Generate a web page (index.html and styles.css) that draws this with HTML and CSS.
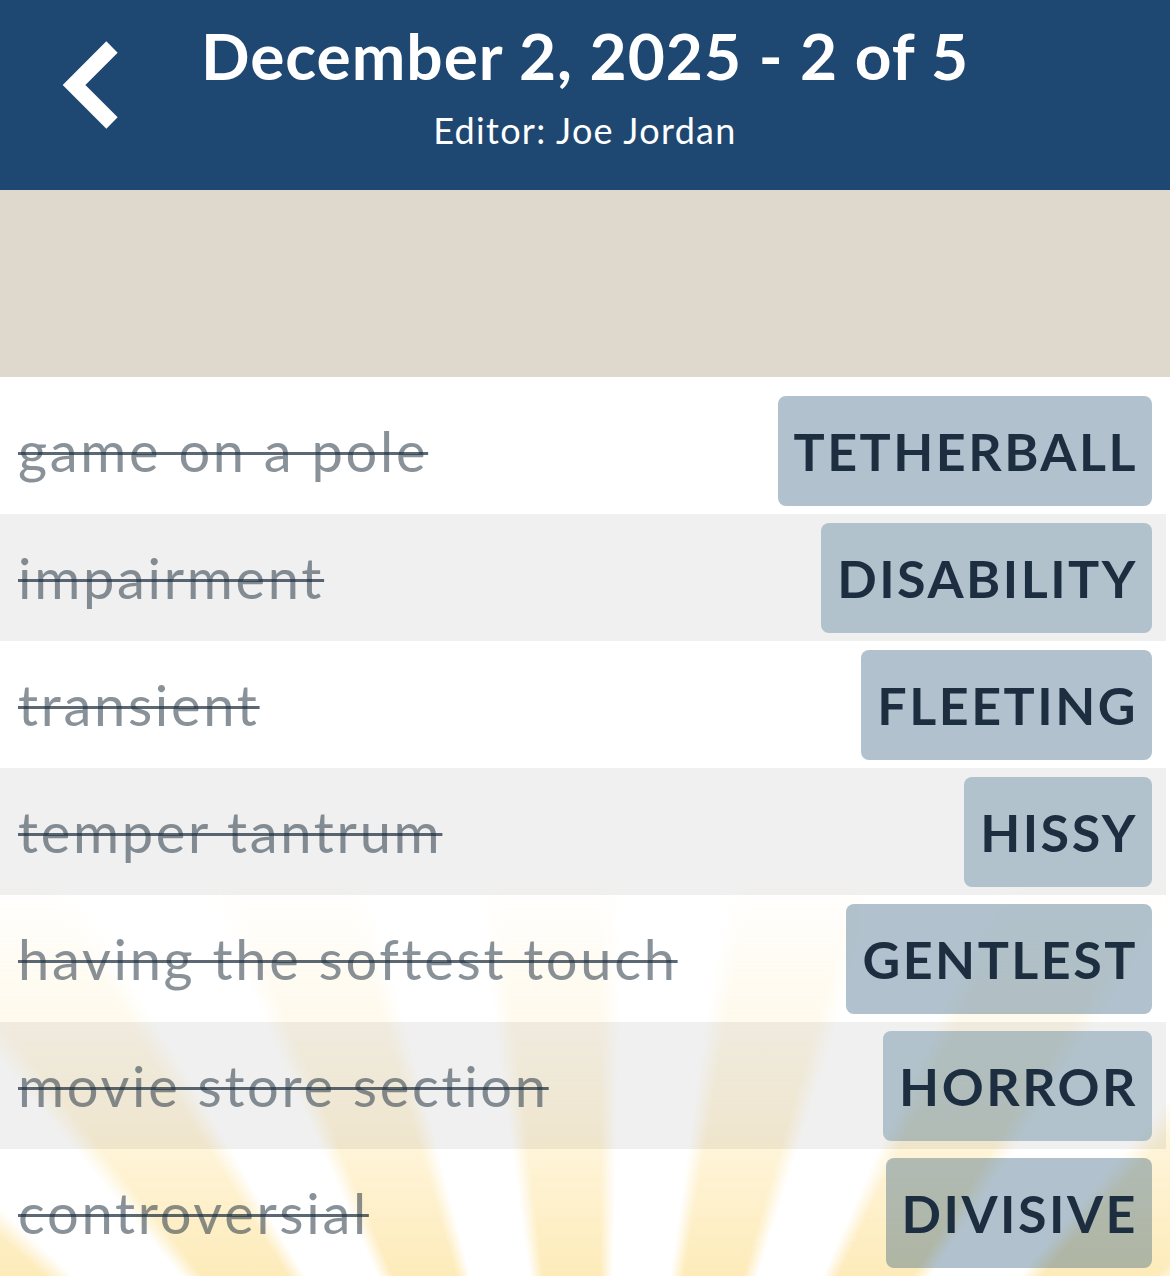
FILE: index.html
```html
<html>

<head>
    <meta name="viewport" content="width=device-width, initial-scale=1.0, maximum-scale=1.0">
    <link rel="stylesheet" href="styles.css">
</head>

<body>
    <div class="header">
        <button class="back" aria-label="Back">
            <svg width="64" height="92" viewBox="0 0 64 92">
                <polyline points="54,8 16,46 54,84" fill="none" stroke="#fff" stroke-width="16" stroke-linejoin="miter" />
            </svg>
        </button>
        <div class="title">
            <div class="date">December 2, 2025 - 2 of 5</div>
            <div class="editor">Editor: Joe Jordan</div>
        </div>
        <div></div>
    </div>

    <div class="banner"></div>

    <div class="clues">
        <div class="rays"></div>

        <div class="row">
            <span class="clue">game on a pole</span>
            <span class="answer">TETHERBALL</span>
        </div>
        <div class="row">
            <span class="clue">impairment</span>
            <span class="answer">DISABILITY</span>
        </div>
        <div class="row">
            <span class="clue">transient</span>
            <span class="answer">FLEETING</span>
        </div>
        <div class="row">
            <span class="clue">temper tantrum</span>
            <span class="answer">HISSY</span>
        </div>
        <div class="row">
            <span class="clue">having the softest touch</span>
            <span class="answer">GENTLEST</span>
        </div>
        <div class="row">
            <span class="clue">movie store section</span>
            <span class="answer">HORROR</span>
        </div>
        <div class="row">
            <span class="clue">controversial</span>
            <span class="answer">DIVISIVE</span>
        </div>
    </div>
</body>

</html>
```

FILE: styles.css
```css
body {
    margin: 0;
    font-family: Lato, "Open Sans", sans-serif;
    background: #fff;
    overflow: hidden;
}

.header {
    height: 190px;
    background: #1e4771;
    color: #fff;
    display: grid;
    grid-template-columns: 1fr auto 1fr;
    align-items: start;
}

.back {
    background: none;
    border: 0;
    padding: 0;
    margin: 39px 0 0 58px;
    width: 64px;
    height: 92px;
    justify-self: start;
}

.title {
    text-align: center;
    padding-top: 20px;
}

.date {
    font-size: 64px;
    font-weight: bold;
    line-height: 72px;
    letter-spacing: 1px;
}

.editor {
    font-size: 36px;
    line-height: 44px;
    margin-top: 16px;
    letter-spacing: 1.3px;
}

.banner {
    height: 187px;
    background: #dfd8cc;
}

.clues {
    position: relative;
    z-index: 0;
    background: #fff;
    padding: 10px 4px 0 0;
}

.row {
    height: 127px;
    display: flex;
    align-items: center;
    justify-content: space-between;
    padding: 0 14px 0 18px;
}

/* first child is the rays layer, so the grey stripes fall on odd children */
.row:nth-child(odd) {
    background: rgba(0, 0, 0, .059);
}

.clue {
    font-size: 56px;
    letter-spacing: 2.7px;
    color: rgba(40, 55, 70, .55);
    text-decoration: line-through;
    text-decoration-color: rgba(29, 47, 63, .72);
    text-decoration-thickness: 3px;
}

.answer {
    height: 110px;
    display: flex;
    align-items: center;
    padding: 0 14px 0 16px;
    border-radius: 8px;
    background: rgba(40, 85, 120, .36);
    color: #1c2e40;
    font-size: 52px;
    font-weight: bold;
    letter-spacing: 2.5px;
}

.row:nth-child(odd) .answer {
    background: rgba(40, 92, 130, .31);
}

/* sunburst glow behind the lower rows */
.rays {
    position: absolute;
    z-index: -1;
    left: 0;
    right: 0;
    bottom: 0;
    height: 400px;
    background: repeating-conic-gradient(from -72deg at 600px calc(100% + 500px),
            rgba(252, 222, 140, 0) 0deg,
            rgba(252, 222, 140, .6) 1.5deg,
            rgba(252, 222, 140, .6) 8deg,
            rgba(252, 222, 140, 0) 9.5deg,
            rgba(252, 222, 140, 0) 16deg);
    -webkit-mask-image: linear-gradient(to top, #000 0%, rgba(0, 0, 0, .45) 40%, transparent 100%);
    mask-image: linear-gradient(to top, #000 0%, rgba(0, 0, 0, .45) 40%, transparent 100%);
}
```
